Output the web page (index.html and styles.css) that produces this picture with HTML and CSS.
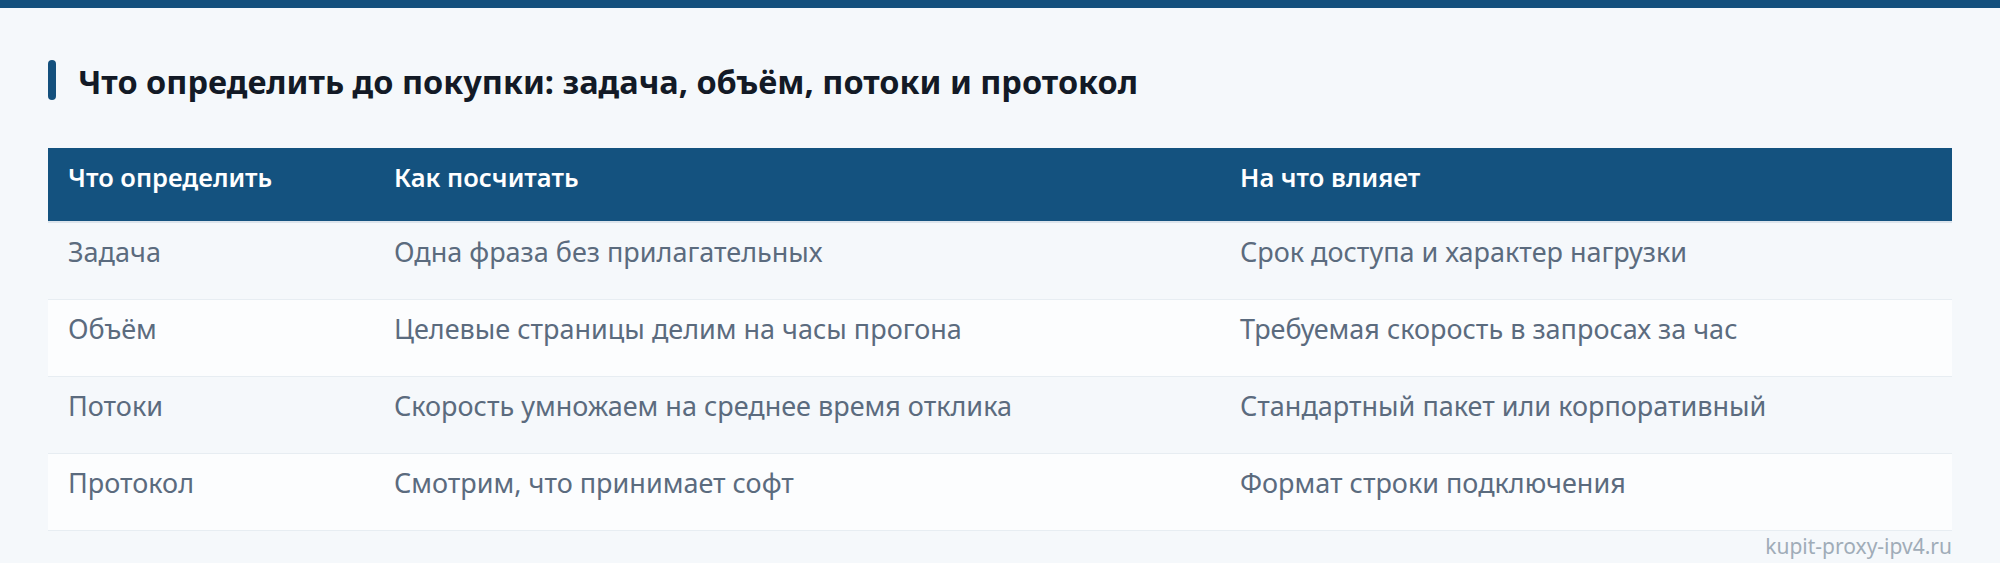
FILE: index.html
```html
<!DOCTYPE html>
<html lang="ru">
<head>
<meta charset="utf-8">
<title>Что определить до покупки</title>
<link rel="stylesheet" href="styles.css">
</head>
<body>
<div class="topbar"></div>
<main class="content">
  <h2 class="title"><span class="accent"></span><span class="title-text">Что определить до покупки: задача, объём, потоки и протокол</span></h2>
  <table class="grid">
    <colgroup>
      <col class="c1"><col class="c2"><col class="c3">
    </colgroup>
    <thead>
      <tr><th>Что определить</th><th>Как посчитать</th><th>На что влияет</th></tr>
    </thead>
    <tbody>
      <tr><td>Задача</td><td>Одна фраза без прилагательных</td><td>Срок доступа и характер нагрузки</td></tr>
      <tr><td>Объём</td><td>Целевые страницы делим на часы прогона</td><td>Требуемая скорость в запросах за час</td></tr>
      <tr><td>Потоки</td><td>Скорость умножаем на среднее время отклика</td><td>Стандартный пакет или корпоративный</td></tr>
      <tr><td>Протокол</td><td>Смотрим, что принимает софт</td><td>Формат строки подключения</td></tr>
    </tbody>
  </table>
  <div class="source">kupit-proxy-ipv4.ru</div>
</main>
</body>
</html>
```
FILE: styles.css
```css
html, body {
  margin: 0;
  padding: 0;
}
body {
  background: #f5f8fb;
  font-family: "Noto Sans", "Open Sans", sans-serif;
  color: #5b6b7e;
}
.topbar {
  height: 8px;
  background: #14507d;
}
.content {
  padding: 52px 48px 0;
}
.title {
  display: flex;
  align-items: center;
  gap: 22px;
  margin: 0;
  height: 40px;
  font-size: 32.5px;
  font-weight: 700;
  color: #131a26;
  line-height: 40px;
}
.title-text {
  padding-top: 4px;
}
.accent {
  width: 8px;
  height: 40px;
  border-radius: 4px;
  background: #14507d;
  flex: none;
}
.grid {
  margin-top: 48px;
  width: 100%;
  border-collapse: collapse;
  table-layout: fixed;
  font-size: 27px;
  line-height: 38px;
}
.c1 { width: 326px; }
.c2 { width: 846px; }
.c3 { width: auto; }
.grid th {
  background: #14527f;
  color: #ffffff;
  font-weight: 600;
  text-align: left;
  vertical-align: top;
  padding: 10px 20px 25px;
  border-bottom: 2px solid #dce4ec;
  font-size: 25.5px;
}
.grid td {
  vertical-align: top;
  padding: 10px 20px 28px;
  border-bottom: 1px solid #e7edf2;
  color: #5b6b7e;
}
.grid tbody tr:nth-child(even) td {
  background: #fcfdfe;
}
.source {
  text-align: right;
  font-size: 21px;
  line-height: 28px;
  color: #a0acb8;
  margin-top: 1px;
}
```
